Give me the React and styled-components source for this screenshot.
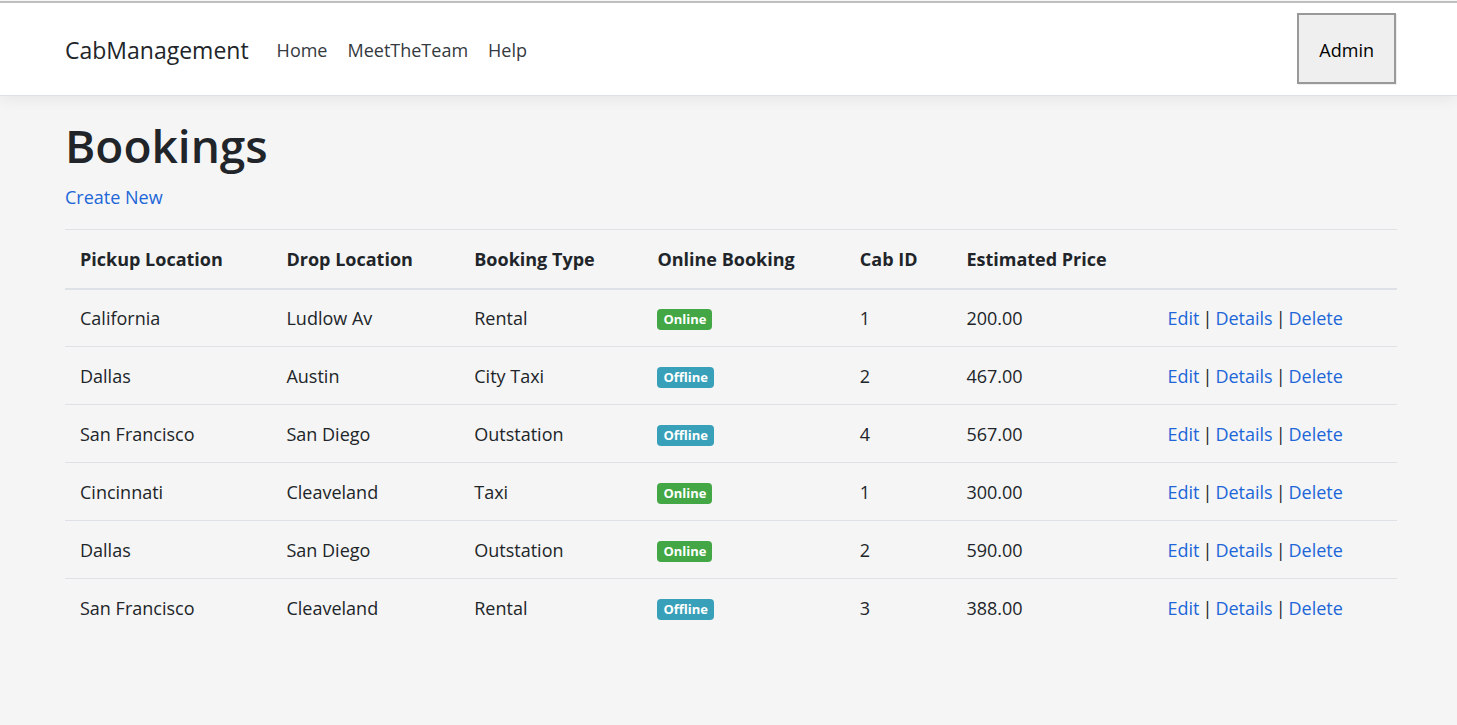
import React from 'react';
import styled, { createGlobalStyle } from 'styled-components';

const Global = createGlobalStyle`
  *, *::before, *::after { box-sizing: border-box; }
  body {
    margin: 0;
    min-height: 100vh;
    background: #f5f5f5;
    color: #212529;
    font: 400 18px/28px "Open Sans", sans-serif;
  }
`;

const Header = styled.header`
  border-top: 1px solid #f5f5f5;
  border-bottom: 1px solid #dee2e6;
  background: #fff;
  box-shadow: 0 4px 14px rgba(0, 0, 0, 0.06);
  &::before {
    content: "";
    display: block;
    height: 2px;
    background: #bfbfbf;
  }
`;

const Bar = styled.nav`
  display: flex;
  align-items: center;
  padding: 10px 61px 11px 65px;
`;

const Brand = styled.a`
  margin-right: 18px;
  padding-top: 2px;
  color: #212529;
  font-size: 23px;
  text-decoration: none;
`;

const Menu = styled.ul`
  display: flex;
  flex: 1;
  margin: 0;
  padding: 2px 0 0;
  list-style: none;
`;

const MenuLink = styled.a`
  padding: 0 10px;
  color: #343a40;
  text-decoration: none;
`;

const AdminButton = styled.button`
  height: 71px;
  padding: 2px 20px 0;
  border: 2px solid #999;
  background: #efefef;
  box-shadow: 1px 1px 0 #eee;
  color: #000;
  font: inherit;
`;

const Main = styled.main`
  padding: 20px 60px 40px 65px;
`;

const Title = styled.h1`
  margin: 0 0 9px;
  font-size: 46px;
  line-height: 58px;
  font-weight: 600;
`;

const Link = styled.a`
  color: #2066d8;
  text-decoration: none;
`;

const Table = styled.table`
  width: 100%;
  margin-top: 18px;
  border-collapse: collapse;
  table-layout: fixed;
`;

const Col = styled.col`
  width: ${(p) => p.$share}%;
`;

const HeadCell = styled.th`
  height: 59px;
  padding: 0 15px;
  border-top: 1px solid #dee2e6;
  border-bottom: 2px solid #dee2e6;
  text-align: left;
  font-weight: 700;
  white-space: nowrap;
`;

const Cell = styled.td`
  height: 58px;
  padding: 0 15px;
  border-top: 1px solid #dee2e6;
  white-space: nowrap;
`;

const Badge = styled.span`
  display: block;
  width: fit-content;
  margin-top: 4px;
  padding: 0 6px;
  border-radius: 4px;
  background: ${(p) => (p.$online ? '#43a745' : '#38a0b8')};
  color: #fff;
  font-size: 13px;
  line-height: 21px;
  font-weight: 700;
`;

const Actions = styled.div`
  display: flex;
  gap: 3px;
`;

const columns = [
  ['Pickup Location', 15.5],
  ['Drop Location', 14.1],
  ['Booking Type', 13.75],
  ['Online Booking', 15.2],
  ['Cab ID', 8],
  ['Estimated Price', 15.1],
  ['', 18.35],
];

const bookings = [
  ['California', 'Ludlow Av', 'Rental', true, 1, '200.00'],
  ['Dallas', 'Austin', 'City Taxi', false, 2, '467.00'],
  ['San Francisco', 'San Diego', 'Outstation', false, 4, '567.00'],
  ['Cincinnati', 'Cleaveland', 'Taxi', true, 1, '300.00'],
  ['Dallas', 'San Diego', 'Outstation', true, 2, '590.00'],
  ['San Francisco', 'Cleaveland', 'Rental', false, 3, '388.00'],
];

export default function App() {
  return (
    <>
      <Global />
      <Header>
        <Bar>
          <Brand href="#">CabManagement</Brand>
          <Menu>
            {['Home', 'MeetTheTeam', 'Help'].map((label) => (
              <li key={label}><MenuLink href="#">{label}</MenuLink></li>
            ))}
          </Menu>
          <AdminButton type="button">Admin</AdminButton>
        </Bar>
      </Header>
      <Main>
        <Title>Bookings</Title>
        <Link href="#">Create New</Link>
        <Table>
          <colgroup>
            {columns.map(([name, share]) => <Col key={name} $share={share} />)}
          </colgroup>
          <thead>
            <tr>{columns.map(([name]) => <HeadCell key={name} scope="col">{name}</HeadCell>)}</tr>
          </thead>
          <tbody>
            {bookings.map(([pickup, drop, type, online, cab, price], i) => (
              <tr key={i}>
                <Cell>{pickup}</Cell>
                <Cell>{drop}</Cell>
                <Cell>{type}</Cell>
                <Cell><Badge $online={online}>{online ? 'Online' : 'Offline'}</Badge></Cell>
                <Cell>{cab}</Cell>
                <Cell>{price}</Cell>
                <Cell>
                  <Actions>
                    <Link href="#">Edit</Link>
                    <span>|</span>
                    <Link href="#">Details</Link>
                    <span>|</span>
                    <Link href="#">Delete</Link>
                  </Actions>
                </Cell>
              </tr>
            ))}
          </tbody>
        </Table>
      </Main>
    </>
  );
}
